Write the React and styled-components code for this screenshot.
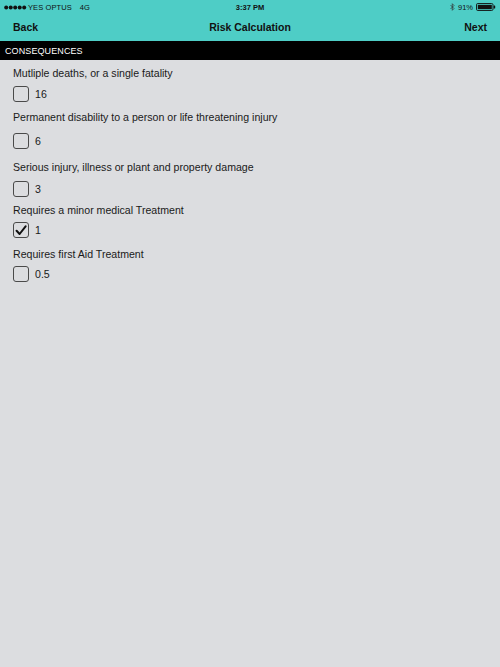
import React from 'react';
import styled, { createGlobalStyle } from 'styled-components';

const GlobalStyle = createGlobalStyle`
  html, body {
    margin: 0;
    padding: 0;
    background: #dcdde0;
  }
  body {
    font-family: 'Liberation Sans', Arial, sans-serif;
    -webkit-font-smoothing: antialiased;
  }
`;

const Page = styled.div`
  width: 500px;
  min-height: 667px;
  background: #dcdde0;
  display: flex;
  flex-direction: column;
`;

const TopArea = styled.div`
  background: #4ecdc6;
  height: 41px;
  display: flex;
  flex-direction: column;
`;

const StatusBar = styled.div`
  height: 14px;
  display: grid;
  grid-template-columns: 1fr auto 1fr;
  align-items: center;
  padding: 0 4px;
  font-size: 7.5px;
  color: #111;
`;

const Carrier = styled.div`
  display: flex;
  align-items: center;
  gap: 1px;
  letter-spacing: 0.1px;

  span {
    margin-left: 7px;
  }
`;

const Clock = styled.div`
  font-weight: bold;
  font-size: 7.5px;
`;

const StatusRight = styled.div`
  display: flex;
  justify-content: flex-end;
  align-items: center;
  gap: 3px;
`;

const NavBar = styled.div`
  flex: 1;
  display: grid;
  grid-template-columns: 1fr auto 1fr;
  align-items: center;
  padding: 0 13px 1px;
  font-size: 10.5px;
  font-weight: bold;
  color: #111;
`;

const NavRight = styled.div`
  text-align: right;
`;

const SectionHeader = styled.div`
  background: #000;
  color: #fff;
  height: 19px;
  display: flex;
  align-items: center;
  padding-left: 5px;
  font-size: 9px;
  letter-spacing: 0.1px;
`;

const List = styled.div`
  display: flex;
  flex-direction: column;
  padding: 7px 13px 0;
`;

const Item = styled.div`
  display: flex;
  flex-direction: column;
  margin-top: ${p => p.$gap || 0}px;
`;

const Question = styled.div`
  font-size: 10.6px;
  color: #1a1a1a;
  line-height: 12px;
  white-space: nowrap;
`;

const Choice = styled.div`
  display: flex;
  align-items: center;
  gap: 6px;
  height: 16px;
  margin-top: ${p => p.$gap}px;
  font-size: 10.6px;
  color: #1a1a1a;
`;

const Box = styled.div`
  box-sizing: border-box;
  width: 16px;
  height: 16px;
  border: 1.4px solid #4a4a4a;
  border-radius: 3px;
  display: flex;
  align-items: center;
  justify-content: center;
`;

const Dots = () => (
  <svg width="23" height="5" viewBox="0 0 23 5">
    {[0, 1, 2, 3, 4].map(i => (
      <circle key={i} cx={2.2 + i * 4.5} cy="2.5" r="2" fill="#111" />
    ))}
  </svg>
);

const Bluetooth = () => (
  <svg width="5" height="8" viewBox="0 0 5 8">
    <path d="M0.5 2 L4 5.5 L2.3 7.3 L2.3 0.7 L4 2.5 L0.5 6" fill="none" stroke="#333" strokeWidth="0.7" />
  </svg>
);

const Battery = () => (
  <svg width="20" height="8" viewBox="0 0 20 8">
    <rect x="0.5" y="0.5" width="16.5" height="7" rx="1.3" fill="none" stroke="#111" strokeWidth="0.9" />
    <rect x="1.8" y="1.8" width="14" height="4.4" fill="#111" />
    <rect x="17.6" y="2.6" width="1.6" height="2.8" rx="0.5" fill="#111" />
  </svg>
);

const Check = () => (
  <svg width="12" height="11" viewBox="0 0 12 11">
    <path d="M1.6 5.8 L4.6 9 L10.6 1.4" fill="none" stroke="#111" strokeWidth="2" strokeLinecap="round" strokeLinejoin="round" />
  </svg>
);

const items = [
  { text: 'Mutliple deaths, or a single fatality', value: '16', gap: 0, choiceGap: 7 },
  { text: 'Permanent disability to a person or life threatening injury', value: '6', gap: 9, choiceGap: 10 },
  { text: 'Serious injury, illness or plant and property damage', value: '3', gap: 12, choiceGap: 8 },
  { text: 'Requires a minor medical Treatment', value: '1', gap: 7, checked: true, choiceGap: 6 },
  { text: 'Requires first Aid Treatment', value: '0.5', gap: 10, choiceGap: 6 },
];

export default function App() {
  return (
    <Page>
      <GlobalStyle />
      <TopArea>
        <StatusBar>
          <Carrier>
            <Dots />
            YES OPTUS
            <span>4G</span>
          </Carrier>
          <Clock>3:37 PM</Clock>
          <StatusRight>
            <Bluetooth />
            91%
            <Battery />
          </StatusRight>
        </StatusBar>
        <NavBar>
          <div>Back</div>
          <div>Risk Calculation</div>
          <NavRight>Next</NavRight>
        </NavBar>
      </TopArea>
      <SectionHeader>CONSEQUENCES</SectionHeader>
      <List>
        {items.map(item => (
          <Item key={item.value} $gap={item.gap}>
            <Question>{item.text}</Question>
            <Choice $gap={item.choiceGap}>
              <Box>{item.checked && <Check />}</Box>
              {item.value}
            </Choice>
          </Item>
        ))}
      </List>
    </Page>
  );
}
